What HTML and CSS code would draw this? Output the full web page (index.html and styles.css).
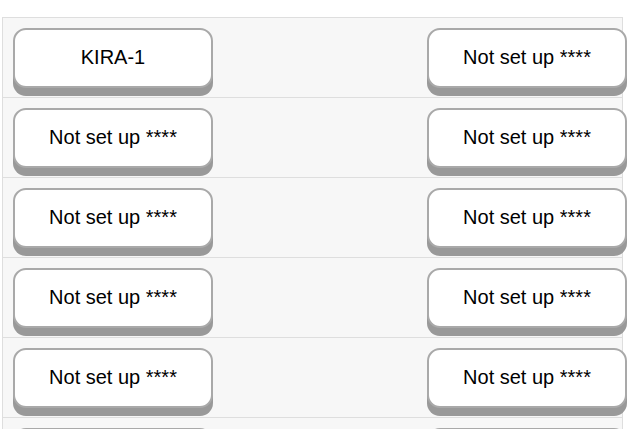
FILE: index.html
```html
<!DOCTYPE html>
<html>
  <head>
    <meta charset="UTF-8" />
    <title>Devices</title>
    <link rel="stylesheet" href="styles.css">
  </head>
  <body>

    <div class="device-list">
      <div class="device-row">
        <button class="device-btn">KIRA-1</button>
        <button class="device-btn">Not set up ****</button>
      </div>
      <div class="device-row">
        <button class="device-btn">Not set up ****</button>
        <button class="device-btn">Not set up ****</button>
      </div>
      <div class="device-row">
        <button class="device-btn">Not set up ****</button>
        <button class="device-btn">Not set up ****</button>
      </div>
      <div class="device-row">
        <button class="device-btn">Not set up ****</button>
        <button class="device-btn">Not set up ****</button>
      </div>
      <div class="device-row">
        <button class="device-btn">Not set up ****</button>
        <button class="device-btn">Not set up ****</button>
      </div>
      <div class="device-row">
        <button class="device-btn">Not set up ****</button>
        <button class="device-btn">Not set up ****</button>
      </div>
    </div>

  </body>
</html>
```

FILE: styles.css
```css
html {
  overflow: hidden;
}

body {
  margin: 0;
  background: #fff;
  font-family: 'Liberation Sans', Arial, sans-serif;
  color: #000;
}

.device-list {
  width: 619px;
  margin: 17px 0 0 2px;
  background: #f7f7f7;
  border: 1px solid #dedede;
  border-bottom: none;
}

.device-row {
  display: flex;
  justify-content: space-between;
  align-items: flex-start;
  padding: 10px 0 0 10px;
  height: 69px;
  border-bottom: 1px solid #dedede;
}

.device-btn {
  width: 200px;
  height: 60px;
  box-sizing: border-box;
  background: #fff;
  border: 2px solid #a9a9a9;
  border-radius: 13px;
  box-shadow: 0 8px 0 #999;
  font-family: inherit;
  font-size: 20px;
  color: #000;
  padding: 0 0 1px 0;
  cursor: pointer;
}

.device-btn:last-child {
  margin-right: -5px;
}
```
